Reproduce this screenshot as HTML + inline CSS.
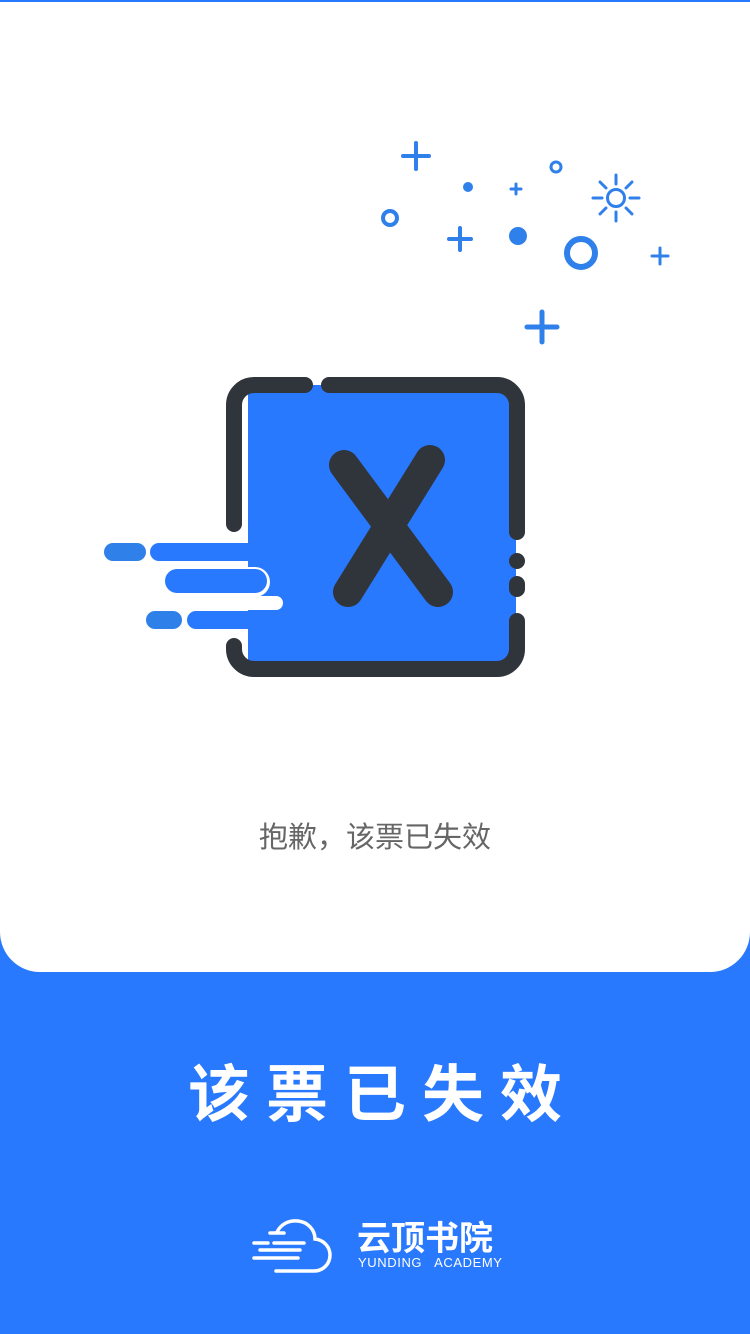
<!DOCTYPE html>
<html><head><meta charset="utf-8"><style>
html,body{margin:0;padding:0;}
body{width:750px;height:1334px;background:#2979fe;position:relative;overflow:hidden;font-family:"Liberation Sans","Noto Sans CJK SC",sans-serif;}
.card{position:absolute;left:0;top:0;width:750px;height:972px;background:#fff;border-radius:0 0 40px 40px;border-top:2px solid #2979fe;box-sizing:border-box;}
.msg{position:absolute;top:814px;left:0;width:750px;text-align:center;font-size:29px;color:#666;}
.title{position:absolute;top:1060px;left:0;width:750px;text-align:center;font-size:62px;font-weight:bold;color:#fff;letter-spacing:16px;text-indent:16px;line-height:72px;}
</style></head><body>
<div class="card"></div>
<svg style="position:absolute;left:0;top:0" width="750" height="972" viewBox="0 0 750 972">
<g stroke="#2f80ea" fill="none" stroke-linecap="round">
<path d="M403 156h26M416 143v26" stroke-width="4"/>
<path d="M511 189h10M516 184v10" stroke-width="3"/>
<circle cx="556" cy="167" r="5" stroke-width="3"/>
<circle cx="616" cy="198" r="8.5" stroke-width="3"/>
<path d="M616 175v9M616 212v9M593 198h9M630 198h9M600 182l6 6M626 208l6 6M632 182l-6 6M606 208l-6 6" stroke-width="3"/>
<circle cx="390" cy="218" r="7" stroke-width="4"/>
<path d="M449 239h22M460 228v22" stroke-width="4"/>
<circle cx="581" cy="253" r="14" stroke-width="6"/>
<path d="M652 256h16M660 248v16" stroke-width="3"/>
<path d="M527 327h30M542 312v30" stroke-width="5"/>
</g>
<circle cx="468" cy="187" r="5" fill="#2f80ea"/>
<circle cx="518" cy="236" r="9" fill="#2f80ea"/>
<rect x="248" y="385" width="268" height="284" fill="#2979fe"/>
<path d="M113 552h24" stroke="#2f80e8" stroke-width="18" stroke-linecap="round"/>
<path d="M159 552h95" stroke="#2979fe" stroke-width="18" stroke-linecap="round"/>
<path d="M196 603h80" stroke="#fff" stroke-width="14" stroke-linecap="round"/>
<path d="M175 582h80" stroke="#fff" stroke-width="30" stroke-linecap="round"/>
<path d="M177 581h78" stroke="#2979fe" stroke-width="24" stroke-linecap="round"/>
<path d="M155 620h18" stroke="#2f80e8" stroke-width="18" stroke-linecap="round"/>
<path d="M196 620h58" stroke="#2979fe" stroke-width="18" stroke-linecap="round"/>
<g stroke="#30343b" stroke-width="16" fill="none" stroke-linecap="round">
<path d="M234 524V405a20 20 0 0 1 20-20H305"/>
<path d="M329 385H497a20 20 0 0 1 20 20V532"/>
<path d="M517 584v5"/>
<path d="M517 621v28a20 20 0 0 1-20 20H254a20 20 0 0 1-20-20v-3"/>
<path d="M344 465L438 592M430 460L348 592" stroke-width="30"/>
</g>
<circle cx="517" cy="561" r="8" fill="#30343b"/>
</svg>
<div class="msg">抱歉，该票已失效</div>
<div class="title">该票已失效</div>
<svg style="position:absolute;left:250px;top:1218px" width="90" height="58" viewBox="0 0 90 58">
<g stroke="#fff" stroke-width="3.5" fill="none" stroke-linecap="round">
<path d="M27 14c4-8 12-12 21-11 10 1 17 9 17 18 9 1 15 8 15 16 0 9-7 16-16 16H26"/>
<path d="M20 15h14M4 25h14M24 25h30M10 32h40M4 40h44"/>
</g>
</svg>
<div style="position:absolute;left:357px;top:1220px;color:#fff;font-size:34px;font-weight:bold;line-height:38px;">云顶书院</div>
<div style="position:absolute;left:358px;top:1256px;color:#fff;font-size:13px;line-height:14px;white-space:pre;letter-spacing:0.6px;">YUNDING   ACADEMY</div>
</body></html>
